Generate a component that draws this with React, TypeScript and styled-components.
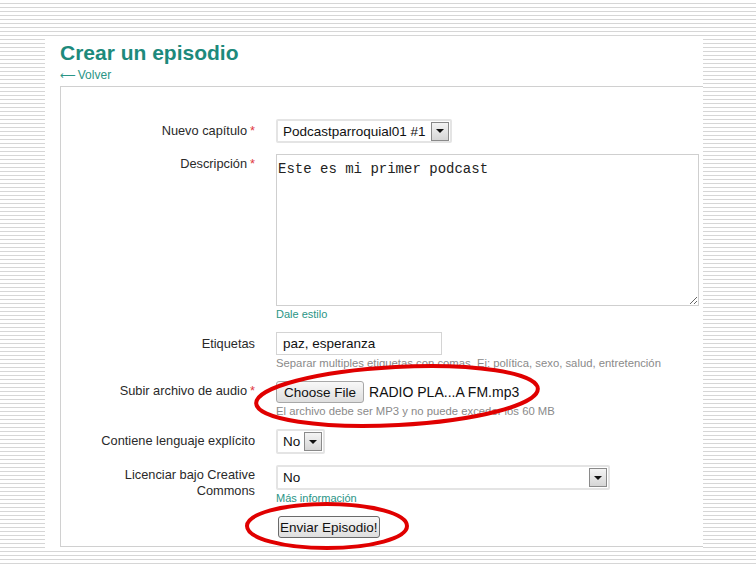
import React from 'react';
import styled, { createGlobalStyle } from 'styled-components';

const GlobalStyle = createGlobalStyle`
  html, body {
    margin: 0;
    padding: 0;
  }
  body {
    width: 756px;
    height: 567px;
    overflow: hidden;
    font-family: "Liberation Sans", Arial, sans-serif;
    background: repeating-linear-gradient(to bottom, #ffffff 0px, #ffffff 3px, #d6d6d6 3px, #d6d6d6 4px);
  }
`;

// Slide with striped background around the screenshot
const Slide = styled.div`
  position: relative;
  box-sizing: border-box;
  width: 756px;
  height: 567px;
  padding: 37px 53px 19px 45px;
`;

const Shot = styled.div`
  height: 511px;
  background: #fff;
  overflow: hidden;
  padding-left: 15px;
`;

const Title = styled.h1`
  margin: 0;
  padding-top: 4px;
  font-size: 21px;
  line-height: 24px;
  font-weight: bold;
  color: #1d8a7c;
`;

const BackLink = styled.a`
  display: block;
  margin-top: 3px;
  font-size: 12px;
  line-height: 14px;
  color: #2a9586;
  text-decoration: none;
`;

const Arrow = styled.span`
  font-family: "DejaVu Sans", sans-serif;
  font-size: 11px;
  margin-right: 2px;
`;

const Panel = styled.div`
  box-sizing: border-box;
  margin-top: 3px;
  width: 680px;
  height: 461px;
  border: 1px solid #d0d0d0;
  padding-top: 32px;
  display: flex;
  flex-direction: column;
  gap: 11px;
`;

const Row = styled.div`
  display: grid;
  grid-template-columns: 194px 1fr;
  column-gap: 21px;
  align-items: start;
`;

const Label = styled.div<{ $top?: number }>`
  text-align: right;
  font-size: 12.8px;
  line-height: 16px;
  color: #2a2a2a;
  padding-top: ${p => p.$top ?? 4}px;
`;

const Req = styled.span`
  color: #e0393e;
  margin-left: 3px;
`;

const Field = styled.div`
  display: flex;
  flex-direction: column;
  align-items: flex-start;
`;

const SelectBox = styled.div<{ $w: number; $h?: number }>`
  box-sizing: border-box;
  width: ${p => p.$w}px;
  height: ${p => p.$h ?? 24}px;
  border: 2px solid #e4e4e4;
  border-radius: 2px;
  display: flex;
  align-items: center;
  justify-content: space-between;
  padding: 0 1px 0 5px;
  font-size: 13.5px;
  color: #111;
`;

const DropButton = styled.span`
  box-sizing: border-box;
  width: 18px;
  height: 19px;
  border: 1px solid #8a8a8a;
  background: linear-gradient(#f4f4f4, #d6d6d6);
  display: flex;
  align-items: center;
  justify-content: center;
  &::after {
    content: '';
    border-left: 4px solid transparent;
    border-right: 4px solid transparent;
    border-top: 4px solid #111;
  }
`;

const TextArea = styled.textarea`
  box-sizing: border-box;
  width: 423px;
  height: 152px;
  border: 1px solid #cfcfcf;
  padding: 6px 1px 4px;
  font-family: "Liberation Mono", "Courier New", monospace;
  font-size: 14px;
  line-height: 16px;
  color: #222;
  resize: both;
  outline: none;
`;

const SmallLink = styled.a`
  margin-top: 2px;
  font-size: 11px;
  line-height: 13px;
  color: #2a9586;
  text-decoration: none;
`;

const TextInput = styled.input`
  box-sizing: border-box;
  width: 166px;
  height: 23px;
  border: 1px solid #d4d4d4;
  padding: 0 6px;
  font-family: "Liberation Sans", Arial, sans-serif;
  font-size: 13.5px;
  color: #111;
  outline: none;
`;

const Hint = styled.div`
  margin-top: 2px;
  font-size: 11.3px;
  line-height: 13px;
  color: #8a8a8a;
  white-space: nowrap;
`;

const FileRow = styled.div`
  display: flex;
  align-items: center;
  gap: 5px;
  font-size: 14px;
  color: #111;
`;

const Button = styled.button<{ $dark?: boolean }>`
  box-sizing: border-box;
  height: 22px;
  padding: ${p => (p.$dark ? '0 1px' : '0 7px')};
  border: 1px solid ${p => (p.$dark ? '#6a6a6a' : '#a8a8a8')};
  border-radius: 3px;
  background: linear-gradient(#f8f8f8, #dedede);
  font-family: "Liberation Sans", Arial, sans-serif;
  font-size: 13.5px;
  color: #111;
`;

const SubmitWrap = styled.div`
  padding-left: 2px;
`;

const Marks = styled.svg`
  position: absolute;
  left: 0;
  top: 0;
  pointer-events: none;
`;

const App = () => {
  return (
    <Slide>
      <GlobalStyle />
      <Shot>
        <Title>Crear un episodio</Title>
        <BackLink href="#"><Arrow>⟵</Arrow>Volver</BackLink>
        <Panel>
          <Row>
            <Label>Nuevo capítulo<Req>*</Req></Label>
            <Field>
              <SelectBox $w={176}>
                Podcastparroquial01 #1
                <DropButton />
              </SelectBox>
            </Field>
          </Row>
          <Row>
            <Label $top={2}>Descripción<Req>*</Req></Label>
            <Field>
              <TextArea defaultValue="Este es mi primer podcast" />
              <SmallLink href="#">Dale estilo</SmallLink>
            </Field>
          </Row>
          <Row>
            <Label>Etiquetas</Label>
            <Field>
              <TextInput defaultValue="paz, esperanza" />
              <Hint>Separar multiples etiquetas con comas. Ej: política, sexo, salud, entretención</Hint>
            </Field>
          </Row>
          <Row>
            <Label $top={2}>Subir archivo de audio<Req>*</Req></Label>
            <Field>
              <FileRow>
                <Button>Choose File</Button>
                RADIO PLA...A FM.mp3
              </FileRow>
              <Hint>El archivo debe ser MP3 y no puede exceder los 60 MB</Hint>
            </Field>
          </Row>
          <Row>
            <Label>Contiene lenguaje explícito</Label>
            <Field>
              <SelectBox $w={49} $h={25}>
                No
                <DropButton />
              </SelectBox>
            </Field>
          </Row>
          <Row>
            <Label $top={2}>Licenciar bajo Creative<br />Commons</Label>
            <Field>
              <SelectBox $w={334} $h={25}>
                No
                <DropButton />
              </SelectBox>
              <SmallLink href="#">Más información</SmallLink>
            </Field>
          </Row>
          <Row>
            <Label />
            <Field>
              <SubmitWrap>
                <Button $dark>Enviar Episodio!</Button>
              </SubmitWrap>
            </Field>
          </Row>
        </Panel>
      </Shot>
      <Marks width="756" height="567" viewBox="0 0 756 567">
        <ellipse cx="397" cy="396" rx="141" ry="29" fill="none" stroke="#e00000" strokeWidth="4" transform="rotate(-3 397 396)" />
        <ellipse cx="327" cy="526" rx="80" ry="22" fill="none" stroke="#e00000" strokeWidth="4" />
      </Marks>
    </Slide>
  );
};

export default App;
